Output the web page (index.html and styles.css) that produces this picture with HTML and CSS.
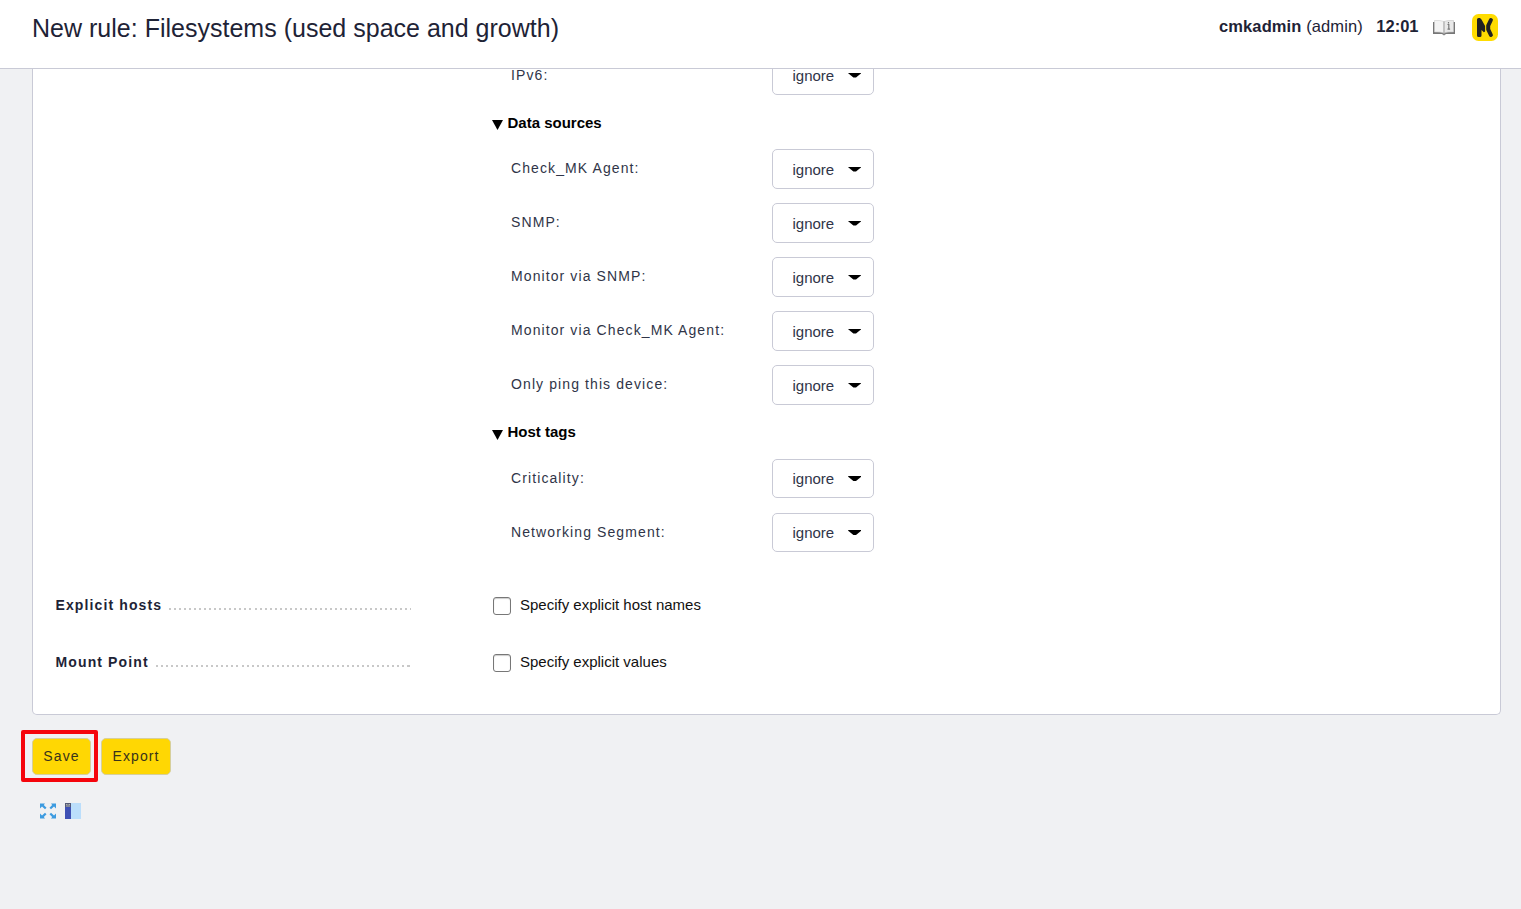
FILE: index.html
```html
<!DOCTYPE html>
<html lang="en">
<head>
<meta charset="utf-8">
<title>New rule: Filesystems (used space and growth)</title>
<link rel="stylesheet" href="styles.css">
</head>
<body>
<header class="topbar">
  <h1 class="title">New rule: Filesystems (used space and growth)</h1>
  <div class="user"><b>cmkadmin</b> (admin)</div>
  <b class="clock">12:01</b>
  <svg class="book" width="22" height="17" viewBox="0 0 22 17">
    <path d="M0 3h2v10h18V3h2v12h-9l-2 1.500-2-1.500H0z" fill="#777"/>
    <path d="M1.500 1.500q6-.5 9.500 1v11.500q-3.500-1.500-9.500-1z" fill="#f3f3f3" stroke="#ccc" stroke-width=".6"/>
    <path d="M20.500 1.500q-6-.5-9.500 1v11.500q3.500-1.500 9.500-1z" fill="#e9e9e9" stroke="#c4c4c4" stroke-width=".6"/>
    <path d="M11 2.500v13" stroke="#aaa" stroke-width="1"/>
    <path d="M15.500 3v1.500M14.500 5.500h1.300v4.500M14.500 10.200h2.600" stroke="#777" stroke-width="1.200" fill="none"/>
  </svg>
  <svg class="logo" width="26" height="27" viewBox="0 0 26 27">
    <rect width="26" height="27" rx="6.500" fill="#ffdc00"/>
    <path d="M5 5.500Q5 4 6.500 4H8l1.500 1.500 3.600 6.500v5.500l-1.300.8-2.300-2.300v5.500Q9.500 23 8 23H6.500Q5 23 5 21.500z" fill="#222"/>
    <path d="M18.900 6l-2.700 5.700v3.600l2.700 5.700" fill="none" stroke="#222" stroke-width="4" stroke-linecap="round" stroke-linejoin="round"/>
  </svg>
</header>
<main class="viewport">
  <section class="card">
    <div class="conditions">
      <div class="row row-first"><span class="label">IPv6:</span><div class="select">ignore<i class="caret"></i></div></div>
      <div class="group"><i class="fold"></i>Data sources</div>
      <div class="row"><span class="label">Check_MK Agent:</span><div class="select">ignore<i class="caret"></i></div></div>
      <div class="row"><span class="label">SNMP:</span><div class="select">ignore<i class="caret"></i></div></div>
      <div class="row"><span class="label">Monitor via SNMP:</span><div class="select">ignore<i class="caret"></i></div></div>
      <div class="row"><span class="label">Monitor via Check_MK Agent:</span><div class="select">ignore<i class="caret"></i></div></div>
      <div class="row"><span class="label">Only ping this device:</span><div class="select">ignore<i class="caret"></i></div></div>
      <div class="group group-tags"><i class="fold"></i>Host tags</div>
      <div class="row row-tags"><span class="label">Criticality:</span><div class="select">ignore<i class="caret"></i></div></div>
      <div class="row row-tags"><span class="label">Networking Segment:</span><div class="select">ignore<i class="caret"></i></div></div>
    </div>
    <div class="option">
      <div class="legend"><b>Explicit hosts</b><span class="dots"></span></div>
      <i class="checkbox"></i><span>Specify explicit host names</span>
    </div>
    <div class="option">
      <div class="legend"><b>Mount Point</b><span class="dots"></span></div>
      <i class="checkbox"></i><span>Specify explicit values</span>
    </div>
  </section>
  <div class="actions">
    <div class="button save">Save<span class="highlight"></span></div>
    <div class="button export">Export</div>
  </div>
  <div class="tools">
    <svg width="16" height="16" viewBox="0 0 16 16">
      <path d="M0 .5h5L3.800 2 6.500 4.700 5 6.200 2 3.500 0 5.500zM16 .5v5L14 3.500 11 6.200 9.500 4.700 12.200 2 11 .5zM0 15.500v-5l2 2L5 9.800l1.500 1.500L3.800 14 5 15.500zM16 15.500h-5l1.200-1.500-2.700-2.700L11 9.800l3 2.700 2-2z" fill="#3d9be0"/>
    </svg>
    <svg width="16" height="16" viewBox="0 0 16 16">
      <path d="M0 0h16v16H0z" fill="#bbdefb"/>
      <path d="M0 0h6v16H0z" fill="#3f51b5"/>
      <path d="M0 0h6v4H0z" fill="#555b78"/>
      <path d="M1 1.500h1.500M3.500 1.500H5M1 3h4" stroke="#c8c9c0" stroke-width=".8"/>
    </svg>
  </div>
</main>
</body>
</html>
```
FILE: styles.css
```css
* { box-sizing: border-box; }
body {
  margin: 0;
  height: 909px;
  overflow: hidden;
  background: #f0f1f3;
  color: #1e2336;
  font: 15px/20px "Liberation Sans", Arial, sans-serif;
}
.topbar {
  display: flex;
  align-items: flex-start;
  height: 69px;
  padding-left: 32px;
  background: #fff;
  border-bottom: 1px solid #c9cad6;
}
.title { margin: 13px auto 0 0; font-size: 25px; line-height: 30px; font-weight: 400; letter-spacing: .01px; }
.user, .clock { margin-top: 16px; font-size: 16.5px; }
.user { letter-spacing: .1px; }
.clock { margin-left: 13.5px; }
.book { margin: 19px 0 0 14.5px; }
.logo { margin: 14px 23px 0 17px; }
.viewport { height: 840px; overflow: hidden; }
.card {
  width: 1469px;
  height: 667px;
  margin: -21px 0 0 32px;
  background: #fff;
  border: 1px solid #c9cad6;
  border-top: 0;
  border-radius: 0 0 5px 5px;
}
.conditions { width: 400px; height: 529px; margin-left: 459px; }
.row { display: flex; height: 54px; padding: 7px 0 7px 19px; }
.label { width: 261px; padding-top: 9px; font-size: 14px; letter-spacing: 1.1px; color: #303548; }
.row-first .label { padding-top: 10px; }
.select {
  display: flex;
  align-items: center;
  width: 102px;
  height: 40px;
  padding: 2px 0 0 19.5px;
  border: 1px solid #c9cad6;
  border-radius: 5px;
  color: #303548;
}
.row-tags .select { height: 39px; padding-top: 0; }
.caret { width: 13px; height: 5px; margin: -2px 0 0 14px; background: #000; clip-path: polygon(0 0, 100% 0, 100% 17%, 60% 100%, 40% 100%, 0 17%); }
.row-tags .caret { margin-top: 0; }
.group { display: flex; height: 40px; padding-top: 11px; color: #000; font-weight: 700; }
.group-tags { padding-top: 10px; }
.fold { width: 11px; height: 10px; margin: 7px 4.5px 0 0; background: #000; clip-path: polygon(0 0, 100% 0, 50% 100%); }
.group-tags .fold { margin-top: 8px; }
.option { display: flex; height: 57px; padding: 18px 0 0 22.5px; color: #111; }
.legend { display: flex; width: 355.5px; margin-right: 82px; font-size: 14px; letter-spacing: 1.12px; white-space: nowrap; color: #1e2336; }
.dots {
  flex: 1;
  height: 2px;
  margin: 13px 0 0 7px;
  background: repeating-linear-gradient(90deg, #c8c8c8 0 2px, transparent 2px 5.03px);
}
.checkbox { width: 18px; height: 18px; margin: 2px 9px 0 0; border: 1px solid #777; border-radius: 3px; background: #fff; box-shadow: inset 0 1px 1px #ccc; }
.actions { display: flex; gap: 10px; margin: 23px 0 0 32px; }
.button {
  position: relative;
  height: 37px;
  padding-top: 7px;
  border: 1px solid #d6cf9c;
  border-radius: 5px;
  background: #ffd703;
  color: #38331b;
  font-size: 14px;
  letter-spacing: 1.1px;
  text-align: center;
}
.save { width: 59px; }
.export { width: 70px; }
.highlight { position: absolute; left: -12px; top: -9px; width: 77px; height: 52px; border: 4px solid #f5050c; border-radius: 2px; }
.tools { display: flex; gap: 9px; margin: 28px 0 0 40px; }
```
